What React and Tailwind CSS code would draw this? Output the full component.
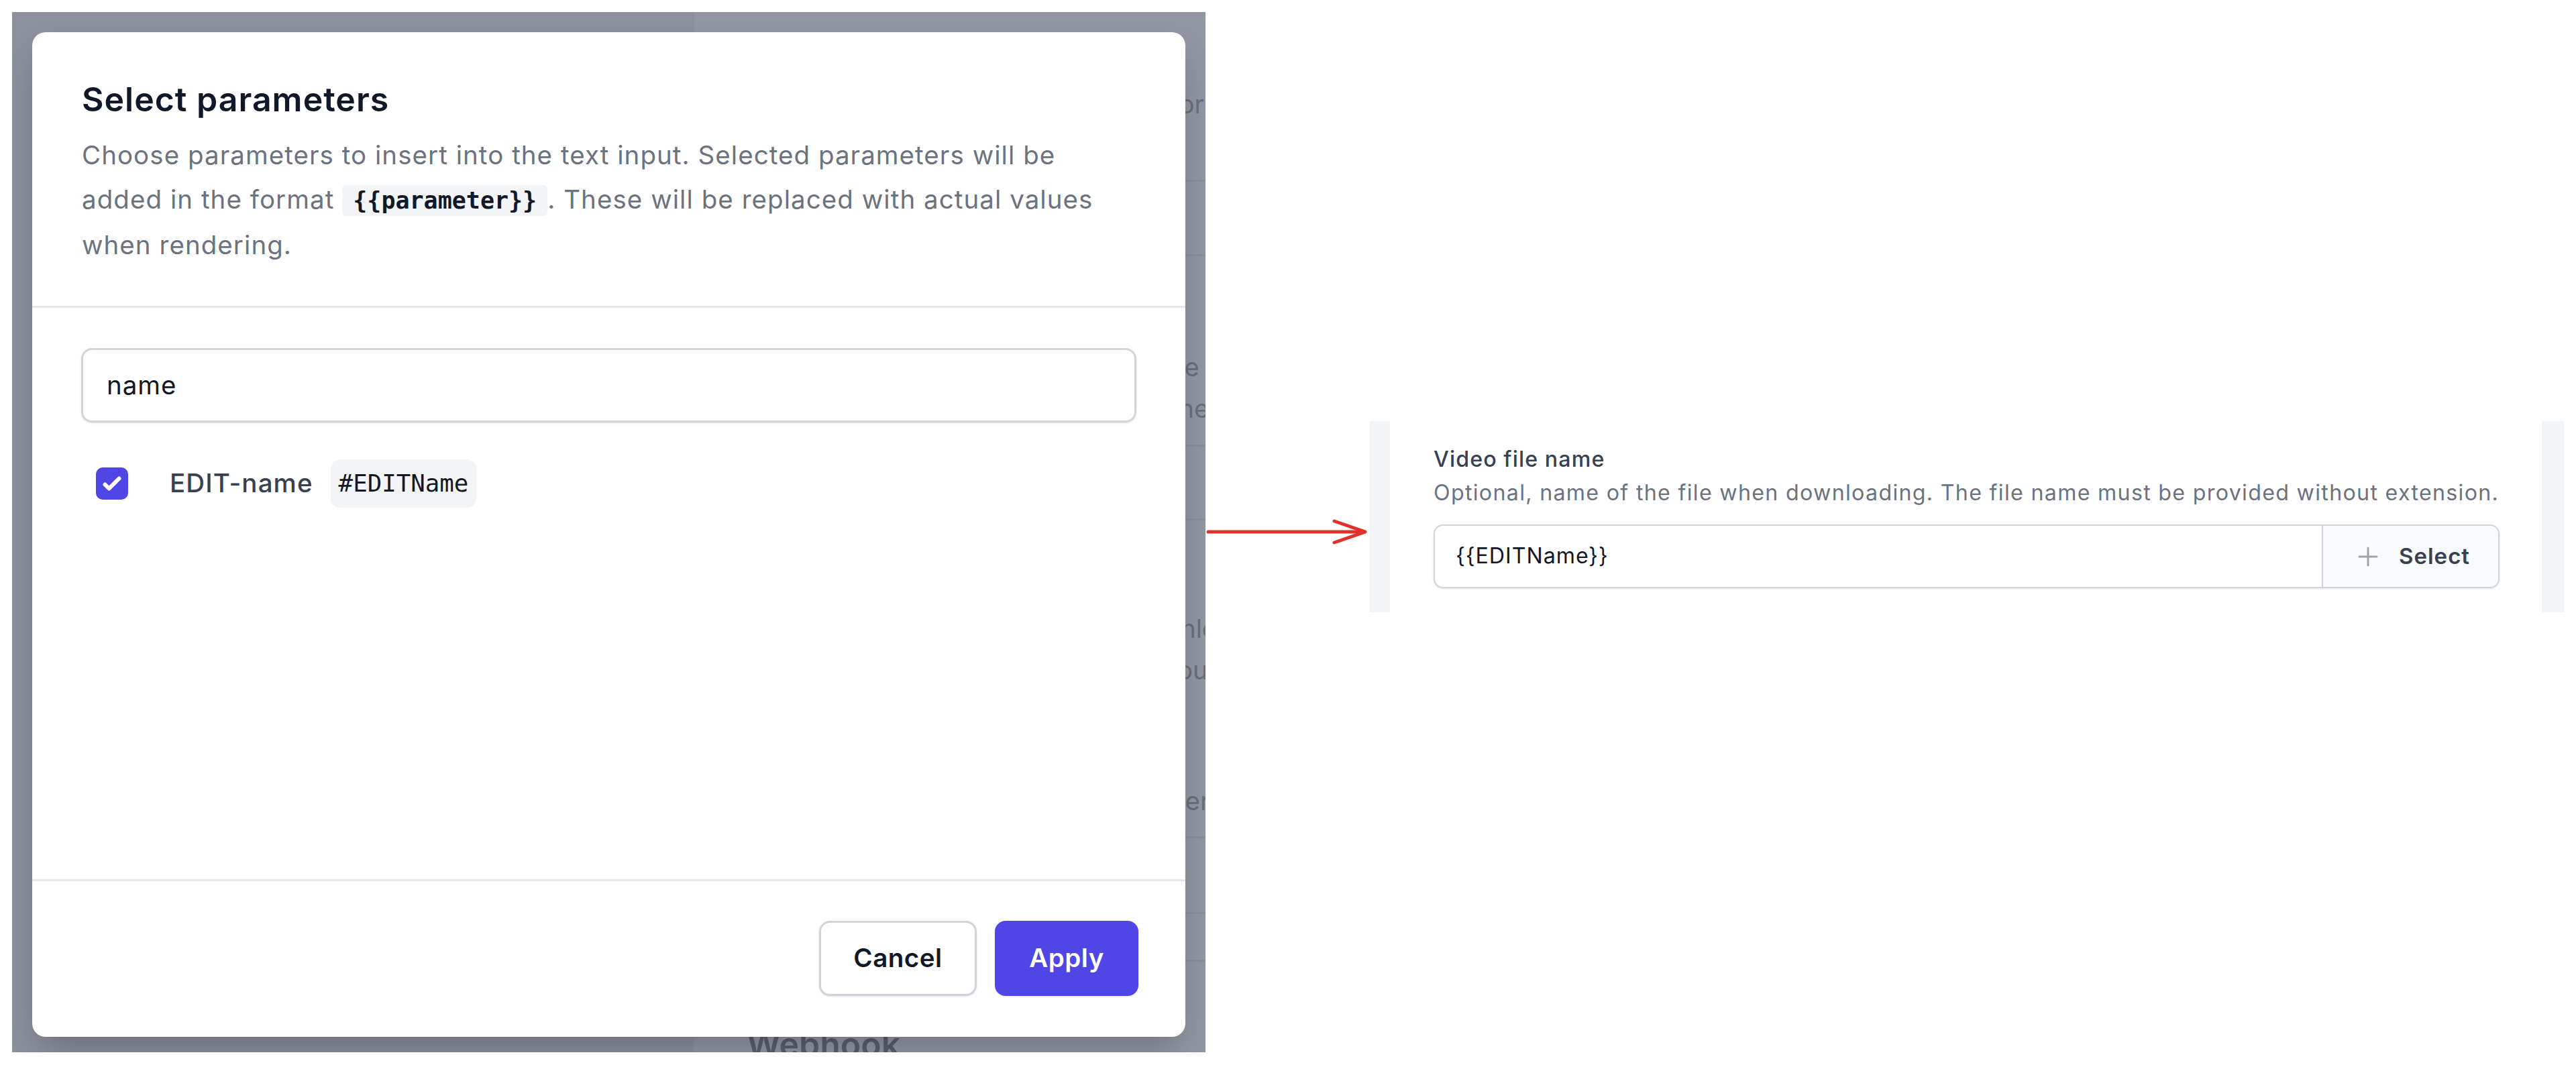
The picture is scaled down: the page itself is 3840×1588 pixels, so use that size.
import React from 'react'

// background page rows peeking out from behind the overlay
function BackdropPage() {
  return (
    <div className="flex-1 min-w-0 overflow-hidden bg-[#9196a2] text-[#696e7a] text-[38px] leading-[62px] whitespace-nowrap">
      <div className="h-[253px] border-b-[3px] border-[#898e99] pl-[78px] pt-[106px]">Name of the template used for this form</div>
      <div className="h-[111px] border-b-[3px] border-[#898e99]" />
      <div className="h-[284px] border-b-[3px] border-[#898e99] pl-[78px] pt-[134px]">
        <div>Choose the file format used when the vid</div>
        <div>video is rendered and sent back to the</div>
      </div>
      <div className="h-[110px] border-b-[3px] border-[#898e99]" />
      <div className="h-[474px] border-b-[3px] border-[#898e99] pl-[78px] pt-[130px]">
        <div>Optional, name of the file when downlo</div>
        <div>the file name must be provided withou and</div>
        <div className="mt-[133px]">Receive a notification when the render is w</div>
      </div>
      <div className="h-[113px] border-b-[3px] border-[#898e99]" />
      <div className="h-[71px] border-b-[3px] border-[#898e99]" />
      <div className="pl-[78px] pt-[92px] text-[50px] font-semibold text-[#5a5f6b]">Webhook</div>
    </div>
  )
}

function SelectParamsModal() {
  return (
    <div className="absolute left-[30px] top-[30px] w-[1719px] h-[1498px] bg-white rounded-[20px] shadow-2xl flex flex-col overflow-hidden">
      <div className="px-[74px] pt-[62px] pb-[58px] border-b-[3px] border-[#e5e7eb]">
        <h2 className="text-[50px] leading-[77px] font-semibold tracking-[1px] text-[#111827]">Select parameters</h2>
        <p className="mt-[11px] text-[38.5px] leading-[66px] tracking-[1.05px] text-[#6b7280] whitespace-nowrap">
          Choose parameters to insert into the text input. Selected parameters will be
          <br />
          added in the format{' '}
          <code className="px-[16px] py-[3px] rounded-[6px] bg-[#f3f4f6] text-[#111827] font-bold tracking-normal text-[35px] font-['DejaVu_Sans_Mono',monospace]">
            {'{{parameter}}'}
          </code>
          . These will be replaced with actual values
          <br />
          when rendering.
        </p>
      </div>

      <div className="flex-1 px-[73px] pt-[60px]">
        <div className="h-[111px] border-[3px] border-[#d1d5db] rounded-[16px] shadow-sm flex items-center px-[35px] text-[38.5px] tracking-[1px] text-[#111827]">
          name
        </div>
        <div className="mt-[55px] h-[72px] flex items-center pl-[22px]">
          <div className="w-[48px] h-[48px] rounded-[10px] bg-[#4f46e5] flex items-center justify-center shrink-0">
            <svg viewBox="0 0 16 16" width="48" height="48" fill="white">
              <path d="M12.207 4.793a1 1 0 010 1.414l-5 5a1 1 0 01-1.414 0l-2-2a1 1 0 011.414-1.414L6.5 9.086l4.293-4.293a1 1 0 011.414 0z" />
            </svg>
          </div>
          <span className="ml-[62px] text-[38.5px] font-medium tracking-[1.1px] text-[#374151]">EDIT-name</span>
          <span className="ml-[26px] h-[72px] flex items-center px-[12px] rounded-[14px] bg-[#f3f4f6] text-[35.75px] text-[#111827] font-['DejaVu_Sans_Mono',monospace]">
            #EDITName
          </span>
        </div>
      </div>

      <div className="border-t-[3px] border-[#e5e7eb] pt-[59px] pb-[61px] px-[70px] flex justify-end gap-[27px]">
        <button className="w-[235px] h-[112px] rounded-[16px] border-[3px] border-[#d1d5db] bg-white shadow-sm text-[38.5px] font-semibold tracking-[0.5px] text-[#111827]">
          Cancel
        </button>
        <button className="w-[214px] h-[112px] rounded-[16px] bg-[#4f46e5] shadow-sm text-[38.5px] font-semibold tracking-[0.5px] text-white">
          Apply
        </button>
      </div>
    </div>
  )
}

function VideoFileField() {
  return (
    <div className="mt-[610px] w-[1780px] h-[285px] flex shrink-0">
      <div className="w-[30px] bg-[#f3f4f6]" />
      <div className="flex-1 bg-white pl-[65px] pr-[63px] pt-[34px]">
        <div className="text-[32.2px] leading-[46px] font-medium tracking-[1.1px] text-[#374151]">Video file name</div>
        <div className="mt-[4px] text-[32.2px] leading-[46px] tracking-[1.3px] text-[#6b7280] whitespace-nowrap">
          Optional, name of the file when downloading. The file name must be provided without extension.
        </div>
        <div className="mt-[24px] h-[95px] border-2 border-[#d1d5db] rounded-[14px] shadow-sm flex overflow-hidden">
          <div className="flex-1 flex items-center pl-[31px] text-[32.2px] tracking-[1px] text-[#111827]">{'{{EDITName}}'}</div>
          <div className="w-[263px] border-l-2 border-[#d1d5db] bg-[#f9fafb] flex items-center pl-[52px]">
            <svg width="30" height="30" viewBox="0 0 30 30" fill="none" stroke="#9ca3af" strokeWidth="3" strokeLinecap="round">
              <path d="M15 2v26M2 15h26" />
            </svg>
            <span className="ml-[31px] text-[33px] font-semibold tracking-[1px] text-[#374151]">Select</span>
          </div>
        </div>
      </div>
      <div className="w-[33px] bg-[#f3f4f6]" />
    </div>
  )
}

export default function App() {
  return (
    <div className="w-[3840px] min-h-[1588px] bg-white flex items-start pt-[18px] pl-[18px] font-['Inter',sans-serif]">
      <div className="relative w-[1779px] h-[1551px] shrink-0 flex overflow-hidden">
        <div className="w-[1017px] shrink-0 bg-[#8b909c]" />
        <BackdropPage />
        <SelectParamsModal />
      </div>

      <svg className="shrink-0 mt-[750px]" width="245" height="50" viewBox="0 0 245 50" fill="none" stroke="#e2302d" strokeWidth="5" strokeLinecap="round" strokeLinejoin="round">
        <path d="M4 25H237" />
        <path d="M192 9L238 25L192 41" />
      </svg>

      <VideoFileField />
    </div>
  )
}
